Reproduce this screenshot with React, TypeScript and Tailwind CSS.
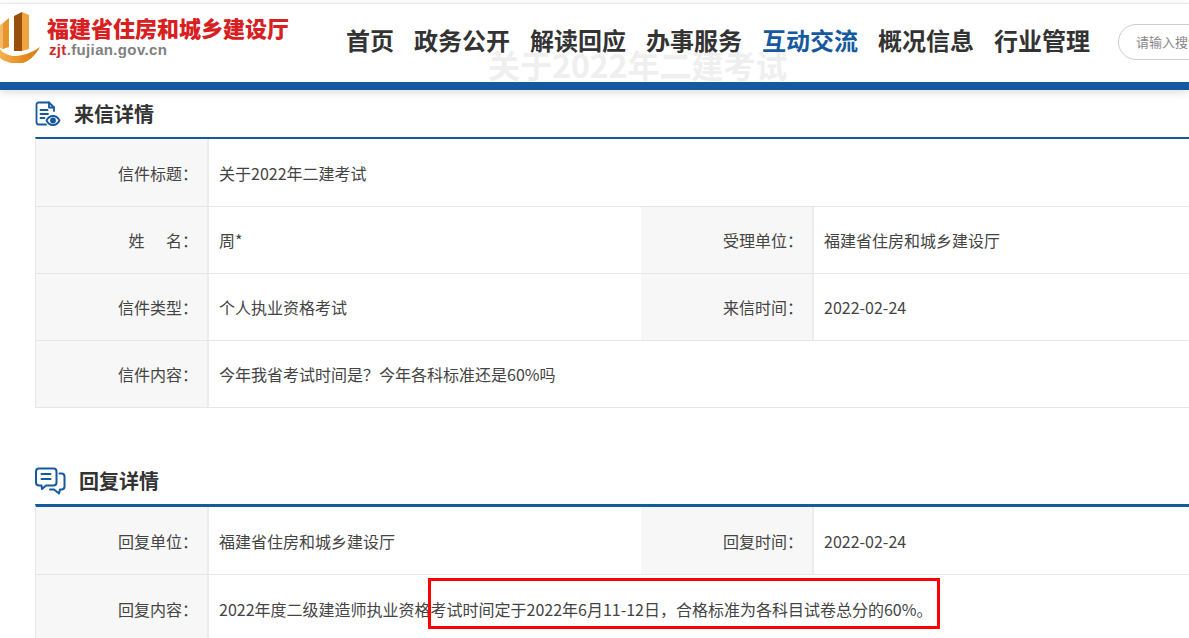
const font = { fontFamily: '"Noto Sans CJK SC", sans-serif' };

function Logo() {
  return (
    <svg width="42" height="52" viewBox="0 0 42 52" className="shrink-0">
      <defs>
        <linearGradient id="b" x1="0" x2="1" y1="0" y2="0">
          <stop offset="0" stopColor="#a9560f" />
          <stop offset="0.45" stopColor="#8a4509" />
          <stop offset="0.5" stopColor="#f0a23e" />
          <stop offset="1" stopColor="#f6b35a" />
        </linearGradient>
        <linearGradient id="s" x1="0" x2="1" y1="0" y2="0">
          <stop offset="0" stopColor="#f6b04e" />
          <stop offset="0.6" stopColor="#e48a1e" />
          <stop offset="1" stopColor="#d4820f" />
        </linearGradient>
      </defs>
      <path d="M3 12 L9 7 L9 36 L3 38 Z" fill="#e8962b" />
      <path d="M0 14 L3 12 L3 38 L0 37 Z" fill="#f5b866" />
      <path d="M14 5 L22 1 L22 40 L14 40 Z" fill="#9a4e0c" />
      <path d="M22 1 L29 4 L29 38 L22 40 Z" fill="#efa43f" />
      <path d="M0 38 C8 49 26 46 40 36 C33 49 21 57 8 51 C5 50 2 49 0 47 Z" fill="url(#s)" />
    </svg>
  );
}

function DocIcon() {
  return (
    <svg width="26" height="26" viewBox="0 0 26 26" fill="none" stroke="#15599e" strokeWidth="1.8" strokeLinecap="round" strokeLinejoin="round">
      <path d="M11 23.5 H3.5 C2 23.5 1.5 22.5 1.5 21.5 V3.5 C1.5 2 2.5 1.5 3.5 1.5 H14 L19 6.5 V10" />
      <path d="M14 1.5 V6.5 H19" />
      <path d="M5.5 9 H12.5 M5.5 13 H13 M5.5 17 H9.5" />
      <path d="M11.5 19.5 C13 16.5 15.5 15 18 15 C20.5 15 23 16.5 24.5 19.5 C23 22.5 20.5 24 18 24 C15.5 24 13 22.5 11.5 19.5 Z" fill="#fff" />
      <circle cx="18" cy="19.5" r="2" fill="#15599e" />
    </svg>
  );
}

function ChatIcon() {
  return (
    <svg width="31" height="28" viewBox="0 0 31 28" fill="none" stroke="#15599e" strokeWidth="2" strokeLinecap="round" strokeLinejoin="round">
      <path d="M4 1.5 H18.5 C20.5 1.5 21.5 2.5 21.5 4.5 V15.5 C21.5 17.5 20.5 18.5 18.5 18.5 H11 L7 22 L6.5 18.5 H4 C2 18.5 1 17.5 1 15.5 V4.5 C1 2.5 2 1.5 4 1.5 Z" />
      <path d="M6.5 7 H15.5 M6.5 12 H15.5" />
      <path d="M24.5 6.5 H26.5 C28.5 6.5 29.5 7.5 29.5 9.5 V19.5 C29.5 21.5 28.5 22.5 26.5 22.5 H25 L24 26.5 L19 22.5 H15" />
    </svg>
  );
}

function Label({ children, last }: { children: React.ReactNode; last?: boolean }) {
  return (
    <div className={`flex items-center justify-end bg-[#f7f7f7] border-r-2 border-[#ececec] pr-[9px] ${last ? "" : "border-b border-b-[#e6e6e6]"}`}>
      {children}
    </div>
  );
}

function Value({ children, wide, last }: { children: React.ReactNode; wide?: boolean; last?: boolean }) {
  return (
    <div className={`flex items-center pl-[10px] whitespace-nowrap ${wide ? "col-span-3" : ""} ${last ? "" : "border-b border-b-[#e6e6e6]"}`}>
      {children}
    </div>
  );
}

function SectionTitle({ icon, title, gap }: { icon: React.ReactNode; title: string; gap: string }) {
  return (
    <div className={`flex items-center h-[47px] ${gap}`}>
      {icon}
      <h2 className="text-[20px] font-bold text-[#333] leading-none">{title}</h2>
    </div>
  );
}

export default function App() {
  return (
    <div className="relative w-[1189px] h-[638px] overflow-hidden bg-white text-[16px] text-[#444]" style={font}>
      <header className="h-[87px] border-b-[8px] border-[#15599e] shadow-[0_3px_8px_rgba(0,0,0,0.12)] relative">
        <div className="border-t border-[#e8e8e8] mt-[3px] flex items-start">
          <div className="w-[345px] flex gap-[5px] pt-[7px] shrink-0">
            <Logo />
            <div className="pt-[3px]">
              <div className="text-[22px] leading-[26px] font-black text-[#d7201f] whitespace-nowrap">福建省住房和城乡建设厅</div>
              <div className="text-[15px] leading-[20px] font-bold tracking-[0.35px] text-[#808080] pl-[2px]" style={{ fontFamily: '"Liberation Sans", sans-serif' }}>
                <span className="text-[#d0282a]">zjt</span>.fujian.gov.cn
              </div>
            </div>
          </div>
          <nav className="relative z-10 flex gap-[20px] pt-[18px] pl-px text-[24px] font-bold leading-[36px] text-[#333] whitespace-nowrap">
            <span>首页</span>
            <span>政务公开</span>
            <span>解读回应</span>
            <span>办事服务</span>
            <span className="text-[#15599e]">互动交流</span>
            <span>概况信息</span>
            <span>行业管理</span>
          </nav>
          <div className="ml-[28px] mt-[20px] w-[200px] h-[36px] shrink-0 rounded-full border border-[#ccc] pl-[17px] text-[13px] leading-[34px] text-[#888] whitespace-nowrap">
            请输入搜索内容
          </div>
        </div>
        <div className="absolute left-[488px] top-[39px] text-[32px] font-bold leading-[44px] text-[#efefef] whitespace-nowrap">关于2022年二建考试</div>
      </header>

      <main className="pl-[35px]">
        <SectionTitle icon={<DocIcon />} title="来信详情" gap="gap-[13px]" />
        <div className="grid grid-cols-[173px_432px_173px_1fr] grid-rows-[68px_67px_67px_67px] w-[1200px] border-t-[2px] border-t-[#15599e] border-l border-l-[#e6e6e6]">
          <Label>信件标题：</Label>
          <Value wide>关于2022年二建考试</Value>
          <Label>姓&nbsp;&nbsp;&nbsp;&nbsp;&nbsp;&nbsp;名：</Label>
          <Value>
            <span>周*</span>
          </Value>
          <Label>受理单位：</Label>
          <Value>福建省住房和城乡建设厅</Value>
          <Label>信件类型：</Label>
          <Value>个人执业资格考试</Value>
          <Label>来信时间：</Label>
          <Value>2022-02-24</Value>
          <Label>信件内容：</Label>
          <Value wide>今年我省考试时间是？今年各科标准还是60%吗</Value>
        </div>

        <div className="mt-[49px]">
          <SectionTitle icon={<ChatIcon />} title="回复详情" gap="gap-[13px]" />
        </div>
        <div className="grid grid-cols-[173px_432px_173px_1fr] grid-rows-[68px_67px] w-[1200px] border-t-[3px] border-t-[#15599e] border-l border-l-[#e6e6e6]">
          <Label>回复单位：</Label>
          <Value>福建省住房和城乡建设厅</Value>
          <Label>回复时间：</Label>
          <Value>2022-02-24</Value>
          <Label last>回复内容：</Label>
          <Value wide last>2022年度二级建造师执业资格考试时间定于2022年6月11-12日，合格标准为各科目试卷总分的60%。</Value>
        </div>
      </main>

      <div className="absolute left-[428px] top-[578px] w-[512px] h-[51px] border-[3px] border-[#ff0000]" />
    </div>
  );
}
